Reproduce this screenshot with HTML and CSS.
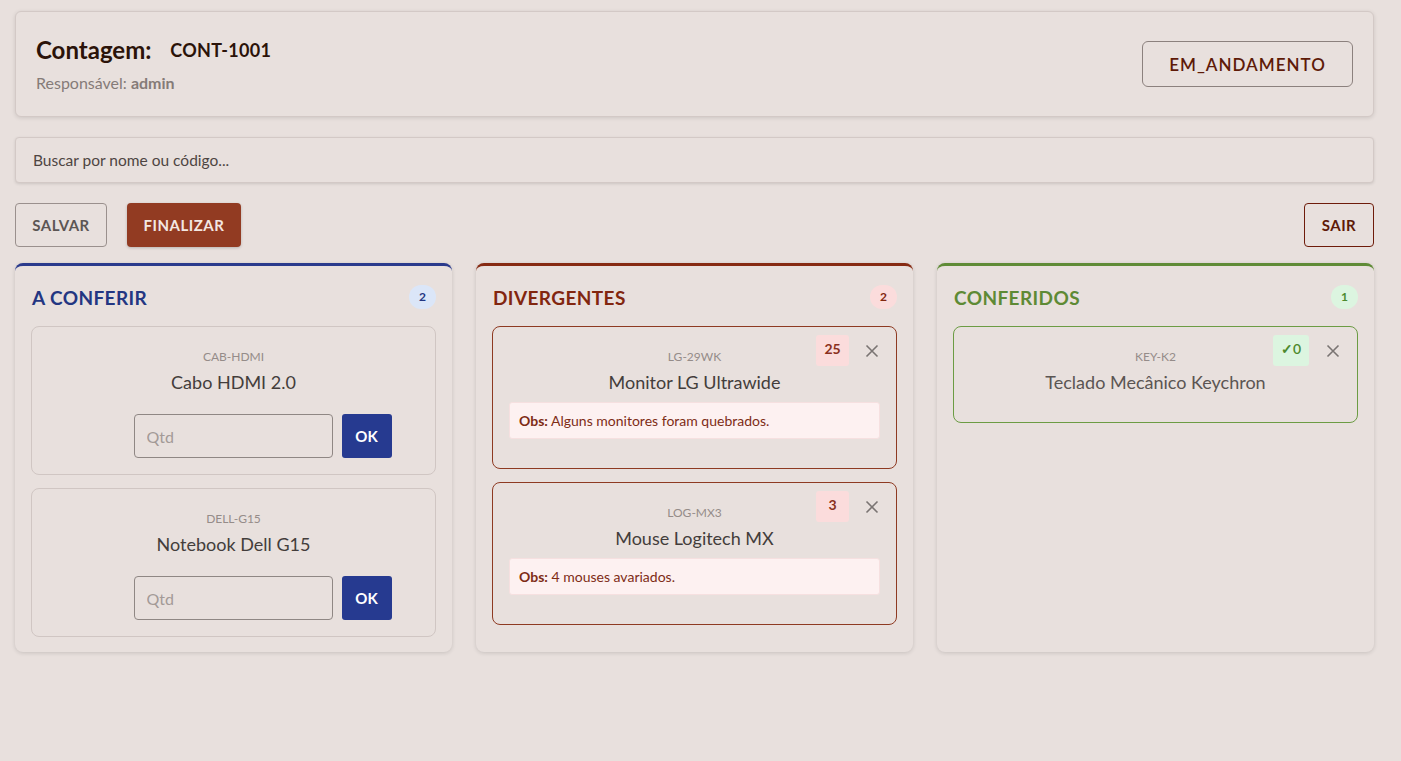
FILE: index.html
```html
<!DOCTYPE html>
<html lang="pt-BR">
<head>
    <meta charset="UTF-8">
    <meta name="viewport" content="width=device-width, initial-scale=1.0">
    <title>Contagem CONT-1001</title>
    <link rel="stylesheet" href="styles.css">
</head>
<body>
    <div class="page">
        <div class="header-card">
            <div class="header-info">
                <h1><span class="label">Contagem:</span> <span class="code">CONT-1001</span></h1>
                <p>Responsável: <strong>admin</strong></p>
            </div>
            <button class="status-btn">EM_ANDAMENTO</button>
        </div>

        <input class="search" type="text" placeholder="Buscar por nome ou código...">

        <div class="actions">
            <div class="actions-left">
                <button class="btn btn-outline">SALVAR</button>
                <button class="btn btn-primary">FINALIZAR</button>
            </div>
            <button class="btn btn-exit">SAIR</button>
        </div>

        <div class="board">
            <!-- A conferir -->
            <div class="column col-blue">
                <div class="column-header">
                    <h2>A CONFERIR</h2>
                    <span class="count">2</span>
                </div>
                <div class="item">
                    <div class="item-code">CAB-HDMI</div>
                    <div class="item-name">Cabo HDMI 2.0</div>
                    <div class="qty-row">
                        <input type="text" placeholder="Qtd">
                        <button>OK</button>
                    </div>
                </div>
                <div class="item">
                    <div class="item-code">DELL-G15</div>
                    <div class="item-name">Notebook Dell G15</div>
                    <div class="qty-row">
                        <input type="text" placeholder="Qtd">
                        <button>OK</button>
                    </div>
                </div>
            </div>

            <!-- Divergentes -->
            <div class="column col-red">
                <div class="column-header">
                    <h2>DIVERGENTES</h2>
                    <span class="count">2</span>
                </div>
                <div class="item item-red">
                    <span class="qty-badge">25</span>
                    <button class="remove" aria-label="remover">
                        <svg viewBox="0 0 14 14" width="14" height="14"><path d="M1.5 1.5 L12.5 12.5 M12.5 1.5 L1.5 12.5" stroke="currentColor" stroke-width="1.6" fill="none"/></svg>
                    </button>
                    <div class="item-code">LG-29WK</div>
                    <div class="item-name">Monitor LG Ultrawide</div>
                    <div class="obs"><b>Obs:</b> Alguns monitores foram quebrados.</div>
                </div>
                <div class="item item-red">
                    <span class="qty-badge">3</span>
                    <button class="remove" aria-label="remover">
                        <svg viewBox="0 0 14 14" width="14" height="14"><path d="M1.5 1.5 L12.5 12.5 M12.5 1.5 L1.5 12.5" stroke="currentColor" stroke-width="1.6" fill="none"/></svg>
                    </button>
                    <div class="item-code">LOG-MX3</div>
                    <div class="item-name">Mouse Logitech MX</div>
                    <div class="obs"><b>Obs:</b> 4 mouses avariados.</div>
                </div>
            </div>

            <!-- Conferidos -->
            <div class="column col-green">
                <div class="column-header">
                    <h2>CONFERIDOS</h2>
                    <span class="count">1</span>
                </div>
                <div class="item item-green">
                    <span class="qty-badge">✓0</span>
                    <button class="remove" aria-label="remover">
                        <svg viewBox="0 0 14 14" width="14" height="14"><path d="M1.5 1.5 L12.5 12.5 M12.5 1.5 L1.5 12.5" stroke="currentColor" stroke-width="1.6" fill="none"/></svg>
                    </button>
                    <div class="item-code">KEY-K2</div>
                    <div class="item-name">Teclado Mecânico Keychron</div>
                </div>
            </div>
        </div>
    </div>
</body>
</html>
```

FILE: styles.css
```css
* {
    box-sizing: border-box;
}

body {
    margin: 0;
    background: #e8e0dd;
    font-family: Lato, 'Noto Sans', sans-serif;
    color: #333;
}

.page {
    padding: 11px 27px 20px 15px;
}

.header-card {
    display: flex;
    align-items: center;
    justify-content: space-between;
    background: #e8e0dd;
    border: 1px solid #d3c9c6;
    border-radius: 6px;
    box-shadow: 0 1px 4px rgba(0,0,0,0.12);
    padding: 18px 20px 20px 20px;
    height: 106px;
}

.header-info h1 {
    margin: 0;
    color: #2b1309;
    font-size: 24px;
    font-weight: 700;
    line-height: 30px;
}

.header-info h1 .code {
    font-size: 18px;
    margin-left: 13px;
    letter-spacing: 0.3px;
    vertical-align: 2px;
}

.header-info p {
    margin: 8px 0 0 0;
    font-size: 16px;
    color: #857b78;
}

.header-info p strong {
    font-weight: 700;
}

.status-btn {
    font-family: inherit;
    width: 211px;
    height: 46px;
    margin-top: 2px;
    background: transparent;
    border: 1px solid #8c817e;
    border-radius: 6px;
    color: #5e1a08;
    font-size: 17px;
    font-weight: 600;
    letter-spacing: 1px;
}

.search {
    display: block;
    width: 100%;
    height: 46px;
    margin-top: 20px;
    padding: 0 17px;
    background: #e8e0dd;
    border: 1px solid #d3c9c6;
    border-radius: 4px;
    box-shadow: 0 1px 3px rgba(0,0,0,0.12);
    font-family: inherit;
    font-size: 15.5px;
    color: #333;
    outline: none;
}

.search::placeholder {
    color: #4e4542;
}

.actions {
    display: flex;
    justify-content: space-between;
    margin-top: 20px;
}

.actions-left {
    display: flex;
    gap: 20px;
}

.btn {
    height: 44px;
    padding: 0 10px;
    border-radius: 4px;
    font-family: inherit;
    font-size: 15px;
    font-weight: 700;
    letter-spacing: 0.5px;
    cursor: pointer;
}

.btn-outline {
    width: 92px;
    background: transparent;
    border: 1px solid #9a908d;
    color: #5c5654;
}

.btn-primary {
    width: 114px;
    background: #923b22;
    border: none;
    color: #f3e7e2;
    box-shadow: 0 1px 3px rgba(0,0,0,0.2);
}

.btn-exit {
    width: 70px;
    background: transparent;
    border: 1px solid #6e1c0a;
    color: #5e1a08;
}

.board {
    display: grid;
    grid-template-columns: repeat(3, 1fr);
    gap: 24px;
    margin-top: 16px;
}

.column {
    background: #e8e0dd;
    border-top: 3px solid;
    border-radius: 8px;
    box-shadow: 0 1px 4px rgba(0,0,0,0.14);
    padding: 12px 16px 15px 16px;
}

.col-blue { border-top-color: #2a3a8c; }
.col-red { border-top-color: #862a12; }
.col-green { border-top-color: #5f8b36; }

.column-header {
    display: flex;
    justify-content: space-between;
    align-items: center;
    height: 38px;
    margin-bottom: 10px;
    padding-left: 1px;
}

.column-header h2 {
    margin: 0;
    font-size: 19px;
    font-weight: 700;
    letter-spacing: 0.4px;
}

.col-blue h2 { color: #233682; }
.col-red h2 { color: #82260f; }
.col-green h2 { color: #5e8a35; }

.count {
    min-width: 27px;
    height: 24px;
    padding: 0 8px;
    border-radius: 12px;
    font-size: 12px;
    font-weight: 700;
    line-height: 24px;
    text-align: center;
}

.col-blue .count { background: #dbe6f8; color: #233682; }
.col-red .count { background: #fbdcdc; color: #82260f; }
.col-green .count { background: #dcf5e0; color: #4d8a2e; }

.item {
    position: relative;
    border: 1px solid #d0c6c3;
    border-radius: 8px;
    padding: 22px 16px 16px 16px;
    margin-bottom: 13px;
    text-align: center;
}

.item:last-child {
    margin-bottom: 0;
}

.item-code {
    font-size: 12px;
    line-height: 16px;
    color: #958c89;
}

.item-name {
    margin-top: 5px;
    font-size: 18px;
    line-height: 24px;
    color: #433d3b;
}

.qty-row {
    display: flex;
    justify-content: center;
    gap: 9px;
    margin-top: 20px;
    padding-left: 58px;
}

.qty-row input {
    width: 199px;
    height: 44px;
    padding: 0 12px;
    background: transparent;
    border: 1px solid #8f8784;
    border-radius: 4px;
    font-family: inherit;
    font-size: 16px;
    outline: none;
}

.qty-row input::placeholder {
    color: #a39a97;
}

.qty-row button {
    width: 50px;
    height: 44px;
    background: #263a90;
    border: none;
    border-radius: 3px;
    color: #fff;
    font-family: inherit;
    font-size: 15px;
    font-weight: 700;
}

.item-red {
    border-color: #8e3a22;
    padding-bottom: 29px;
}

.item-green {
    border-color: #6c9c44;
    padding-bottom: 28px;
}

.item-green .item-name {
    color: #5b5553;
}

.qty-badge {
    position: absolute;
    top: 8px;
    right: 47px;
    min-width: 33px;
    height: 31px;
    padding: 0 7px;
    border-radius: 3px;
    font-size: 14px;
    font-weight: 700;
    line-height: 28px;
    text-align: center;
}

.item-red .qty-badge { background: #fbdcdc; color: #8a3020; }
.item-green .qty-badge { background: #dcf5e0; color: #4d8a2e; min-width: 36px; right: 48px; font-weight: 600; }

.remove {
    position: absolute;
    top: 17px;
    right: 17px;
    padding: 0;
    background: none;
    border: none;
    color: #7a7472;
    cursor: pointer;
}

.remove svg {
    display: block;
}

.obs {
    margin-top: 8px;
    padding: 9px 9px;
    background: #fdf1f1;
    border: 1px solid #f6e0e0;
    border-radius: 3px;
    font-size: 14px;
    line-height: 17px;
    color: #7e2c16;
    text-align: left;
}

.obs b {
    font-weight: 700;
}
```
